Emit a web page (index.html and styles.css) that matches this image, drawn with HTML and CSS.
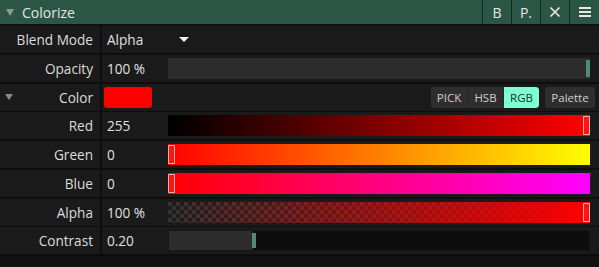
FILE: index.html
```html
<!DOCTYPE html>
<html>
<head>
<meta charset="utf-8">
<link rel="stylesheet" href="styles.css">
</head>
<body>
<div class="panel">
  <div class="header">
    <div class="title"><span class="tri"></span>Colorize</div>
    <div class="hbtn">B</div>
    <div class="hbtn">P.</div>
    <div class="hbtn"><svg width="12" height="12" viewBox="0 0 12 12"><path d="M1.5 1.5 L10.5 10.5 M10.5 1.5 L1.5 10.5" stroke="#e8e8e8" stroke-width="1.6"/></svg></div>
    <div class="hbtn"><svg width="14" height="12" viewBox="0 0 14 12"><path d="M1 2 H13 M1 6 H13 M1 10 H13" stroke="#e8e8e8" stroke-width="2"/></svg></div>
  </div>
  <div class="rows">
    <div class="row">
      <div class="label">Blend Mode</div>
      <div class="value"><span class="text">Alpha</span><span class="drop"></span></div>
    </div>
    <div class="row">
      <div class="label">Opacity</div>
      <div class="value"><span class="text">100 %</span><div class="slider gray"><div class="thumb green right"></div></div></div>
    </div>
    <div class="row">
      <div class="label"><span class="tri small"></span><span class="ltext">Color</span></div>
      <div class="value"><div class="swatch"></div><div class="spacer"></div>
        <div class="seg"><span>PICK</span><span>HSB</span><span class="on">RGB</span></div>
        <div class="pal">Palette</div>
      </div>
    </div>
    <div class="row">
      <div class="label">Red</div>
      <div class="value"><span class="text">255</span><div class="slider red"><div class="thumb ring right"></div></div></div>
    </div>
    <div class="row">
      <div class="label">Green</div>
      <div class="value"><span class="text">0</span><div class="slider green-g"><div class="thumb ring left"></div></div></div>
    </div>
    <div class="row">
      <div class="label">Blue</div>
      <div class="value"><span class="text">0</span><div class="slider blue-g"><div class="thumb ring left"></div></div></div>
    </div>
    <div class="row">
      <div class="label">Alpha</div>
      <div class="value"><span class="text">100 %</span><div class="slider alpha"><div class="thumb ring right"></div></div></div>
    </div>
    <div class="row">
      <div class="label">Contrast</div>
      <div class="value"><span class="text">0.20</span><div class="slider dark"><div class="fill" style="width:20%"></div><div class="thumb green mid"></div></div></div>
    </div>
  </div>
  <div class="footer"></div>
</div>
</body>
</html>
```
FILE: styles.css
```css
* { box-sizing: border-box; }
html, body { margin: 0; padding: 0; background: #111; }
body {
  width: 599px; height: 267px; overflow: hidden;
  font-family: "Open Sans", "Noto Sans", sans-serif;
  color: #e0e0e0;
}
.panel { display: flex; flex-direction: column; }
.header {
  height: 24px; background: #2b5646; display: flex; align-items: stretch;
  border-bottom: 2px solid #121212; box-sizing: content-box;
}
.title {
  flex: 1; display: flex; align-items: center; font-size: 14px; color: #e6e6e6;
  padding-left: 6px;
}
.tri {
  width: 0; height: 0; border-left: 4.5px solid transparent; border-right: 4.5px solid transparent;
  border-top: 7px solid #8c9a94; margin-right: 8px;
}
.hbtn {
  width: 29px; border-left: 1px solid #142a22; display: flex; align-items: center; justify-content: center;
  font-size: 14px; color: #e8e8e8;
}
.hbtn:last-child { width: 30px; }
.rows { display: flex; flex-direction: column; gap: 1.75px; background: #0e0e0e; }
.row {
  height: 27px; display: grid; grid-template-columns: 100px 1fr; column-gap: 2px; background: #0e0e0e;
}
.label {
  background: #1a1a1a; display: flex; align-items: center; justify-content: flex-end;
  padding-right: 7px; font-size: 13.6px; color: #dcdcdc;
}
.label .tri.small { margin-right: auto; margin-left: 5px; border-top-color: #8a8a8a; border-left-width: 4px; border-right-width: 4px; border-top-width: 6px; }
.value {
  background: #1a1a1a; display: flex; align-items: center; padding-left: 5px; padding-right: 9px; font-size: 13.6px; color: #e0e0e0;
}
.text { width: 61px; flex: none; }
.drop {
  width: 0; height: 0; border-left: 5px solid transparent; border-right: 5px solid transparent;
  border-top: 5px solid #f0f0f0; margin-left: 11px;
}
.slider { flex: 1; height: 21px; position: relative; }
.slider.gray { background: #2c2c2c; }
.slider.dark { background: #0c0c0c; border: 1px solid #161616; }
.slider.red { background: linear-gradient(to right, #000, #ff0000); }
.slider.green-g { background: linear-gradient(to right, #ff0000, #ffff00); }
.slider.blue-g { background: linear-gradient(to right, #ff0000, #ff00ff); }
.slider.alpha {
  background:
    linear-gradient(to right, rgba(255,0,0,0), #ff0000),
    conic-gradient(#1c1c1c 25%, #333 0 50%, #1c1c1c 0 75%, #333 0) 0 0 / 8px 8px;
}
.fill { height: 100%; background: #2c2c2c; }
.thumb { position: absolute; }
.thumb.green { background: #4f8c76; top: 2px; bottom: 2px; width: 4px; }
.thumb.green.right { right: 0; }
.thumb.green.mid { left: calc(20% - 1px); }
.thumb.ring {
  top: 1px; bottom: 1px; width: 7px; border: 1.5px solid rgba(255,210,210,0.8);
  border-radius: 1px; background: rgba(255,80,80,0.25);
}
.thumb.ring.right { right: 0; }
.thumb.ring.left { left: 0; }
.swatch { width: 48px; height: 21px; background: #ff0000; border-radius: 3px; flex: none; margin-left: -3px; }
.spacer { flex: 1; }
.seg {
  display: flex; height: 21px; background: #2e2e2e; border-radius: 3px; overflow: hidden;
  font-size: 11.5px; color: #cfcfcf;
}
.seg span { display: flex; align-items: center; justify-content: center; width: 36px; border-left: 1px solid #262626; }
.seg span:first-child { border-left: none; }
.seg span.on { background: #7fffd4; color: #1e2e28; border-radius: 0 3px 3px 0; }
.pal {
  margin-left: 6px; height: 21px; width: 50px; background: #2e2e2e; border-radius: 3px;
  display: flex; align-items: center; justify-content: center; font-size: 11.5px; color: #cfcfcf;
  margin-right: -5px;
}
.footer { flex: 1; height: 11px; background: #141414; border-top: 2px solid #0c0c0c; }
```
